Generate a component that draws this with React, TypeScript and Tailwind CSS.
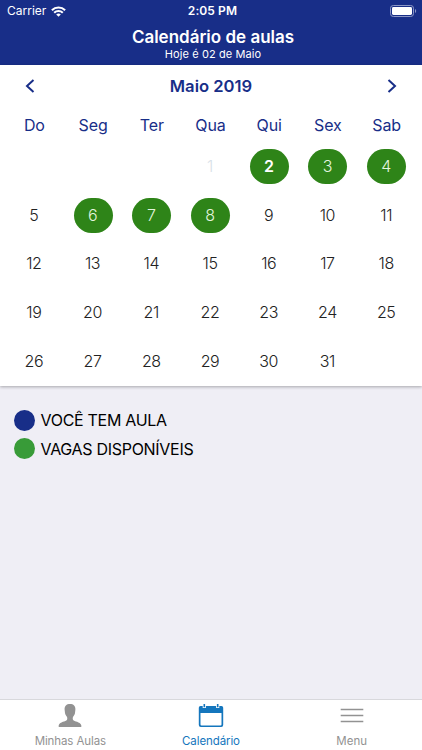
import React from 'react';

interface Day {
  day: number;
  available?: boolean;
  today?: boolean;
  disabled?: boolean;
}

const weekDays = ['Do', 'Seg', 'Ter', 'Qua', 'Qui', 'Sex', 'Sab'];

const FIRST_WEEKDAY = 3;
const TODAY = 2;
const availableDays = [2, 3, 4, 6, 7, 8];

const days: Day[] = Array.from({ length: 31 }, (_, i) => ({
  day: i + 1,
  available: availableDays.includes(i + 1),
  today: i + 1 === TODAY,
  disabled: i + 1 < TODAY,
}));

const StatusBar: React.FC = () => (
  <div className="grid h-[22px] grid-cols-3 items-center pl-[7px] pr-[5px] text-[12px]">
    <div className="flex items-center gap-[5px]">
      <span>Carrier</span>
      <svg width="15" height="11" viewBox="0 0 15 11" fill="none" stroke="currentColor" strokeWidth="2.1">
        <path d="M0.9 4.2a9.4 9.4 0 0 1 13.2 0" />
        <path d="M3.2 6.7a6.1 6.1 0 0 1 8.6 0" />
        <path d="M7.5 10.8 5.2 8.5a3.3 3.3 0 0 1 4.6 0z" fill="currentColor" stroke="none" />
      </svg>
    </div>
    <span className="pl-px text-center font-semibold tracking-[0.1px]">2:05 PM</span>
    <svg className="justify-self-end" width="27" height="12" viewBox="0 0 27 12" fill="none">
      <rect x="0.5" y="0.5" width="23" height="11" rx="2.8" stroke="#8c97c6" />
      <rect x="2" y="2" width="20" height="8" rx="1.4" fill="white" />
      <path d="M25 4v4c1.6-.6 1.6-3.4 0-4z" fill="#8c97c6" />
    </svg>
  </div>
);

const Header: React.FC = () => (
  <header className="h-[65px] shrink-0 bg-[#182e88] text-white">
    <StatusBar />
    <div className="flex flex-col items-center pl-[4px] pt-[5px]">
      <h1 className="text-[17px] font-semibold leading-[20px]">Calendário de aulas</h1>
      <p className="text-[11px] leading-[14px] tracking-[0.1px]">Hoje é 02 de Maio</p>
    </div>
  </header>
);

const DayCell: React.FC<{ item: Day }> = ({ item }) => {
  let style = 'font-light text-[#222]';
  if (item.available) style = 'bg-[#2e8418] font-light text-[#e4f5df]';
  if (item.today) style = 'bg-[#2e8418] font-semibold text-white';
  if (item.disabled) style = 'font-light text-[#d9e1e8]';

  return (
    <div className="flex h-[48.7px] items-center justify-center">
      <span
        className={`flex h-[35px] w-[39px] items-center justify-center rounded-[17.5px] pr-px pb-px text-[16px] tracking-[-0.4px] ${style}`}
      >
        {item.day}
      </span>
    </div>
  );
};

const Calendar: React.FC = () => (
  <section className="relative h-[321px] shrink-0 bg-white pl-[5px] pr-[6px] text-[#182e88] shadow-[0_1px_3px_rgba(0,0,0,0.3)]">
    <div className="flex h-[41px] items-center justify-between pl-[20px] pr-[19px]">
      <svg width="10" height="14" viewBox="0 0 10 14" fill="none" stroke="currentColor" strokeWidth="2">
        <path d="M8.5 1 2 7l6.5 6" />
      </svg>
      <h2 className="pt-px text-[16.6px] font-semibold">Maio 2019</h2>
      <svg width="10" height="14" viewBox="0 0 10 14" fill="none" stroke="currentColor" strokeWidth="2">
        <path d="M1.5 1 8 7l-6.5 6" />
      </svg>
    </div>
    <div className="grid h-[36px] grid-cols-7 items-center pt-px text-center text-[16px] tracking-[-0.1px]">
      {weekDays.map((name) => (
        <span key={name}>{name}</span>
      ))}
    </div>
    <div className="grid grid-cols-7">
      {Array.from({ length: FIRST_WEEKDAY }, (_, i) => (
        <div key={`empty-${i}`} />
      ))}
      {days.map((item) => (
        <DayCell key={item.day} item={item} />
      ))}
    </div>
  </section>
);

const Legend: React.FC = () => (
  <div className="flex flex-1 flex-col px-[14px] pt-[20px] text-[16px] tracking-[-0.3px] text-black">
    <div className="flex h-[28.5px] items-center gap-[5.5px]">
      <span className="size-[21px] rounded-full bg-[#182e88]" />
      VOCÊ TEM AULA
    </div>
    <div className="flex h-[28.5px] items-center gap-[5.5px]">
      <span className="size-[21px] rounded-full bg-[#389b38]" />
      VAGAS DISPONÍVEIS
    </div>
  </div>
);

const TabBar: React.FC = () => (
  <nav className="grid h-[51px] shrink-0 grid-cols-3 border-t border-[#d8d8dc] bg-white text-[11.5px] tracking-[-0.1px] text-[#929292]">
    <div className="flex flex-col items-center">
      <svg className="mt-[3px]" width="24" height="24" viewBox="0 0 24 24" fill="currentColor">
        <path d="M12 1C8.500 1 6.400 3 6.600 6.600L7 10c.2 1.700 1.200 2.700 1.900 3.800.5.900.5 2.500 0 3.300C7.800 18.700 2 18.700.7 22.300V24h22.600v-1.700C22 18.700 16.200 18.700 15.100 17.100c-.5-.8-.5-2.400 0-3.300.7-1.100 1.700-2.100 1.900-3.800l.4-3.400C17.600 3 15.500 1 12 1z" />
      </svg>
      <span className="mt-[7px] leading-[14px]">Minhas Aulas</span>
    </div>
    <div className="flex flex-col items-center text-[#1476bd]">
      <svg className="mt-[4px]" width="26" height="24" viewBox="0 0 26 24" fill="none">
        <path d="M2.5 2h21a1.7 1.7 0 0 1 1.7 1.7V21a2 2 0 0 1-2 2H2.8a2 2 0 0 1-2-2V3.7A1.7 1.7 0 0 1 2.5 2z" fill="currentColor" />
        <path d="M2.5 9h21v11.500a1 1 0 0 1-1 1h-19a1 1 0 0 1-1-1z" fill="white" />
        <path d="M6.300 1v3M19.700 1v3" stroke="white" strokeWidth="3.200" />
        <path d="M6.300 0v3.200M19.700 0v3.200" stroke="currentColor" strokeWidth="1.600" />
      </svg>
      <span className="mt-[6px] leading-[14px]">Calendário</span>
    </div>
    <div className="flex flex-col items-center">
      <svg className="mt-[3px]" width="24" height="24" viewBox="0 0 24 24" fill="none" stroke="currentColor" strokeWidth="1.7">
        <path d="M.7 6.500h22.600M.7 12.500h22.600M.7 18.500h22.600" />
      </svg>
      <span className="mt-[7px] leading-[14px] tracking-normal">Menu</span>
    </div>
  </nav>
);

const App: React.FC = () => {
  return (
    <div className="flex h-[750px] w-[422px] flex-col overflow-hidden bg-[#efeef5] font-[Inter,sans-serif]">
      <Header />
      <Calendar />
      <Legend />
      <TabBar />
    </div>
  );
};

export default App;
